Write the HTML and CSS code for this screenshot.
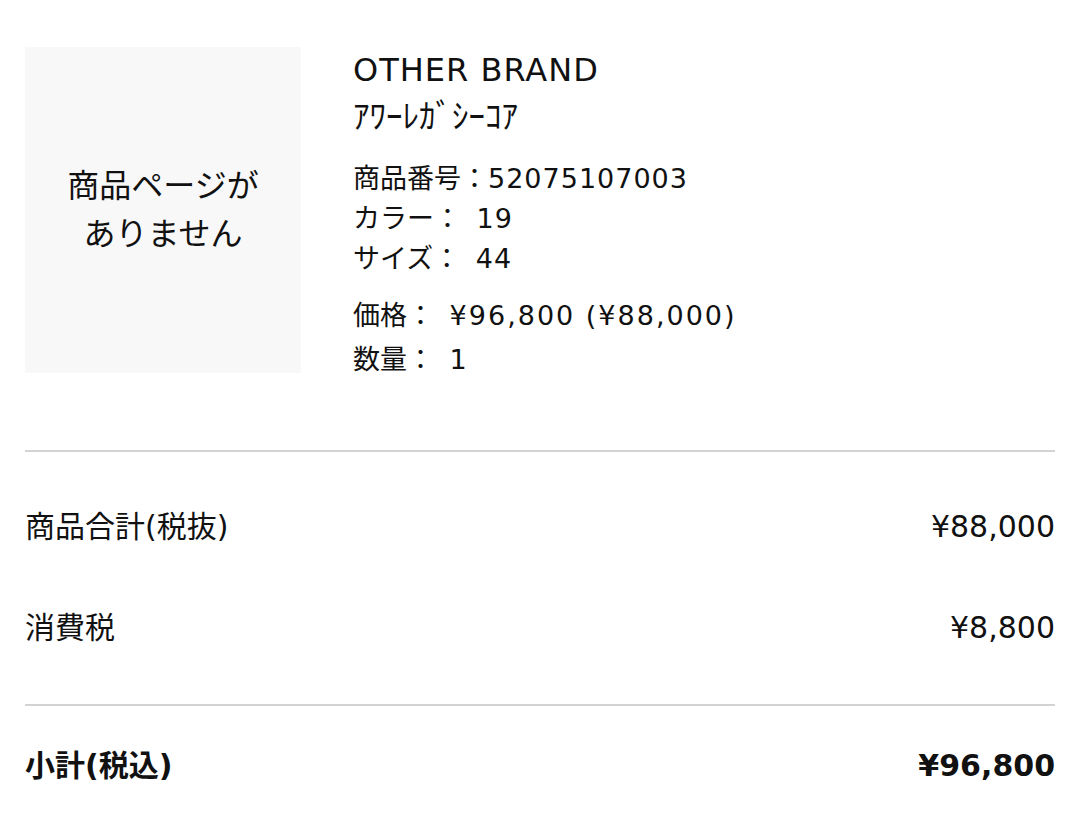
FILE: index.html
```html
<!DOCTYPE html>
<html lang="ja">
<head>
<meta charset="utf-8">
<title>注文明細</title>
<link rel="stylesheet" href="styles.css">
</head>
<body>
<main class="page">
  <section class="product">
    <div class="thumb">
      <p class="thumb-text">商品ページが<br>ありません</p>
    </div>
    <div class="info">
      <div class="brand">OTHER BRAND</div>
      <div class="name">ｱﾜｰﾚｶﾞｼｰｺｱ</div>
      <ul class="specs">
        <li>商品番号：<span class="val">52075107003</span></li>
        <li>カラー： <span class="val">19</span></li>
        <li>サイズ： <span class="val">44</span></li>
      </ul>
      <ul class="prices">
        <li>価格： <span class="val val-price">¥96,800 (¥88,000)</span></li>
        <li>数量： <span class="val">1</span></li>
      </ul>
    </div>
  </section>

  <hr class="divider divider-first">

  <section class="summary">
    <div class="row">
      <span class="label">商品合計(税抜)</span>
      <span class="amount">¥88,000</span>
    </div>
    <div class="row">
      <span class="label">消費税</span>
      <span class="amount">¥8,800</span>
    </div>
  </section>

  <hr class="divider">

  <section class="row total">
    <span class="label">小計(税込)</span>
    <span class="amount">¥96,800</span>
  </section>
</main>
</body>
</html>
```

FILE: styles.css
```css
* {
  box-sizing: border-box;
}

html, body {
  margin: 0;
  padding: 0;
  background: #ffffff;
}

body {
  font-family: "DejaVu Sans", "Noto Sans CJK JP", sans-serif;
  color: #111111;
}

.page {
  padding: 47px 25px 0 25px;
}

.product {
  display: flex;
  align-items: flex-start;
  gap: 52px;
}

.thumb {
  flex: 0 0 276px;
  height: 326px;
  background: #f8f8f8;
  display: flex;
  align-items: center;
  justify-content: center;
}

.thumb-text {
  margin: 0 0 7px;
  font-family: "Noto Sans CJK JP", sans-serif;
  font-size: 32px;
  line-height: 48px;
  text-align: center;
}

.info {
  padding-top: 3px;
  display: flex;
  flex-direction: column;
}

.brand {
  font-size: 32px;
  line-height: 40px;
  height: 40px;
  letter-spacing: 1px;
}

.name {
  margin-top: 4px;
  font-family: "Noto Sans CJK JP", sans-serif;
  font-size: 33px;
  line-height: 40px;
  height: 40px;
}

.specs,
.prices {
  list-style: none;
  margin: 0;
  padding: 0;
  font-size: 27px;
  word-spacing: 7px;
}

.specs {
  margin-top: 25px;
}

.specs li {
  line-height: 40px;
  height: 40px;
}

.prices {
  margin-top: 15px;
}

.prices li {
  line-height: 44px;
  height: 44px;
}

.val {
  letter-spacing: 1px;
  word-spacing: 0;
}

.val-price {
  letter-spacing: 2px;
  word-spacing: 0;
}

.divider {
  margin: 0;
  border: 0;
  height: 2px;
  background: #d3d3d3;
}

.divider-first {
  margin-top: 68px;
}

.summary {
  display: flex;
  flex-direction: column;
  gap: 61px;
  padding: 55px 0 56px;
}

.row {
  display: flex;
  justify-content: space-between;
  align-items: center;
  font-size: 30px;
  line-height: 40px;
  height: 40px;
}

.total {
  margin-top: 40px;
  font-weight: bold;
}
```
